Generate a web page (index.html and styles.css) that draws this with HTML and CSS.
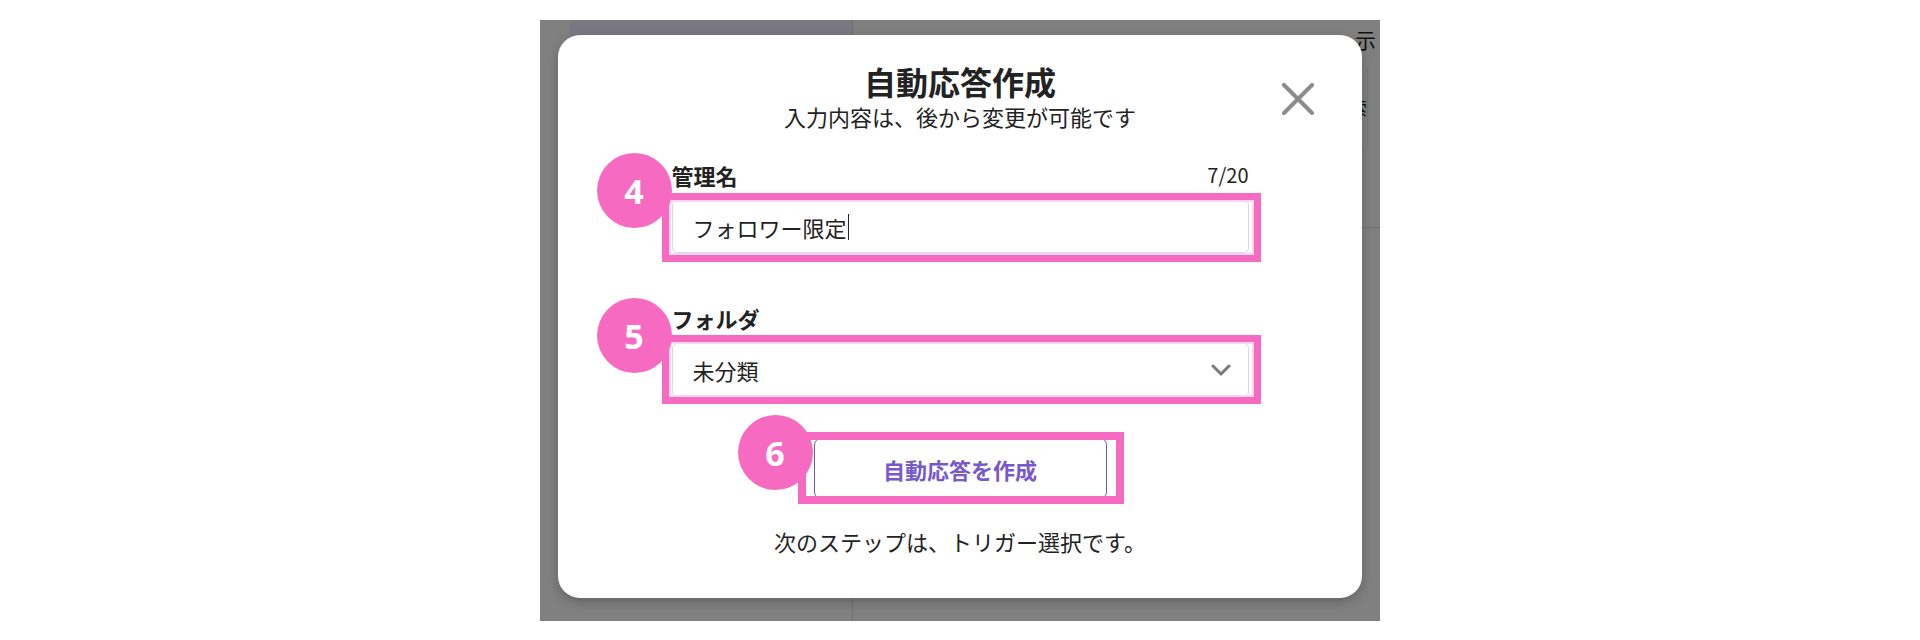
FILE: index.html
```html
<!DOCTYPE html>
<html lang="ja">
<head>
    <meta charset="UTF-8">
    <meta name="viewport" content="width=device-width, initial-scale=1.0">
    <title>自動応答作成</title>
    <link rel="stylesheet" href="styles.css">
</head>
<body>
    <div class="stage">
        <div class="side">
            <div class="side-active"></div>
        </div>
        <div class="main">
            <div class="main-head">示</div>
            <div class="main-tool">検索</div>
            <div class="main-rule"></div>
        </div>

        <div class="modal">
            <h1 class="modal-title">自動応答作成</h1>
            <p class="modal-sub">入力内容は、後から変更が可能です</p>
            <svg class="close" width="32" height="32" viewBox="0 0 32 32">
                <line x1="2" y1="2" x2="30" y2="30" stroke="#8c8c8c" stroke-width="4" stroke-linecap="round"/>
                <line x1="30" y1="2" x2="2" y2="30" stroke="#8c8c8c" stroke-width="4" stroke-linecap="round"/>
            </svg>

            <div class="field field-name">
                <div class="field-head">
                    <span class="label">管理名</span>
                    <span class="count">7/20</span>
                </div>
                <div class="box-wrap">
                    <div class="box">フォロワー限定<span class="caret"></span></div>
                    <div class="mark mark-name"></div>
                    <div class="badge badge-name">4</div>
                </div>
            </div>

            <div class="field field-folder">
                <div class="field-head">
                    <span class="label">フォルダ</span>
                </div>
                <div class="box-wrap">
                    <div class="box box-select">未分類
                        <svg class="chev" width="20" height="12" viewBox="0 0 20 12">
                            <polyline points="2,2 10,10 18,2" fill="none" stroke="#7a7a7a" stroke-width="3" stroke-linecap="round" stroke-linejoin="round"/>
                        </svg>
                    </div>
                    <div class="mark mark-folder"></div>
                    <div class="badge badge-folder">5</div>
                </div>
            </div>

            <div class="btn-wrap">
                <button class="btn" type="button">自動応答を作成</button>
                <div class="mark mark-btn"></div>
                <div class="badge badge-btn">6</div>
            </div>

            <p class="note">次のステップは、トリガー選択です。</p>
        </div>
    </div>
</body>
</html>
```

FILE: styles.css
```css
body { margin: 0; background: #fff; color: #222; font-family: "Noto Sans CJK JP", "Noto Sans", sans-serif; }

.stage { position: relative; display: flex; width: 840px; height: 601px; margin: 20px auto 0; background: #808080; overflow: hidden; }
.side { width: 312px; border-right: 1px solid #6f6f6f; }
.side-active { height: 60px; margin-left: 30px; background: #7a7880; }
.main { flex: 1; display: flex; flex-direction: column; }
.main-head { padding: 6px 4px 0 0; font-size: 21px; line-height: 26px; text-align: right; color: #111; }
.main-tool { height: 79px; margin: 16px 12px 0 0; border-right: 1px solid #767676; font-size: 18px; line-height: 79px; text-align: right; color: #111; }
.main-rule { margin-top: 80px; border-top: 1px solid #707070; }

.modal { position: absolute; left: 18px; top: 15px; width: 804px; height: 563px; box-sizing: border-box; padding-top: 27px; display: flex; flex-direction: column; align-items: center; background: #fff; border-radius: 22px; box-shadow: 0 4px 12px rgba(0, 0, 0, 0.22); }
.modal-title { margin: 0; font-size: 32px; font-weight: 700; line-height: 38px; }
.modal-sub { margin: 1px 0 0; font-size: 22px; line-height: 30px; }
.close { position: absolute; left: 724px; top: 48px; }

.field { width: 577px; }
.field-name { margin-top: 31px; }
.field-folder { margin-top: 52px; }
.field-head { display: flex; justify-content: space-between; align-items: center; height: 26px; }
.label { font-size: 22px; font-weight: 700; line-height: 26px; }
.count { font-size: 20px; line-height: 26px; }

.box-wrap { position: relative; margin-top: 12px; }
.box { display: flex; align-items: center; height: 53px; box-sizing: border-box; padding: 0 17px 0 20px; border: 1px solid #ddd3ec; border-radius: 5px; font-size: 22px; }
.box-select { height: 54px; }
.caret { width: 1px; height: 26px; margin-left: 1px; background: #222; }
.chev { margin-left: auto; }

.btn-wrap { position: relative; margin-top: 41px; }
.btn { display: block; width: 293px; height: 61px; padding: 0; border: 1px solid #6d5c9f; border-radius: 7px; background: #fff; color: #7659cc; font-family: "Noto Sans CJK JP", sans-serif; font-size: 22px; font-weight: 700; }

.note { margin: 27px 0 0; font-size: 22px; line-height: 30px; }

/* annotation overlays */
.mark { position: absolute; border: 7px solid #f66bc1; box-shadow: inset 0 0 0 2px #fbd6ee; pointer-events: none; }
.mark-name { left: -10px; right: -12px; top: -7px; bottom: -9px; }
.mark-folder { left: -10px; right: -12px; top: -8px; bottom: -7px; }
.mark-btn { left: -16px; right: -17px; top: -6px; bottom: -5px; border-width: 8px; box-shadow: none; }

.badge { position: absolute; display: flex; align-items: center; justify-content: center; width: 75px; height: 75px; border-radius: 50%; background: #f66bc1; color: #fff; font-family: "Open Sans", sans-serif; font-size: 34px; font-weight: 700; }
.badge-name { left: -75px; top: -47px; }
.badge-folder { left: -75px; top: -45px; }
.badge-btn { left: -76px; top: -23px; }
```
